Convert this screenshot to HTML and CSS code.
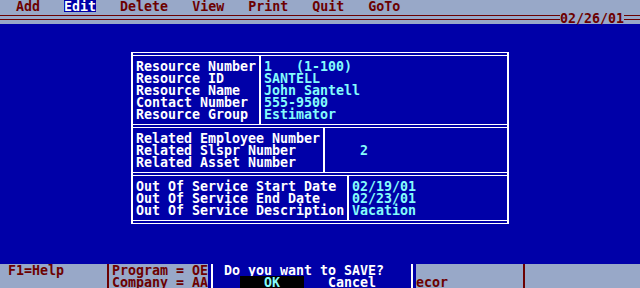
FILE: index.html
```html
<!DOCTYPE html>
<html>
<head>
<meta charset="utf-8">
<link rel="stylesheet" href="styles.css">
</head>
<body>
<div class="screen">
  <div class="menubar"><span class="t">  Add   </span><span class="t hl">Edit</span><span class="t">   Delete   View   Print   Quit   GoTo</span></div>
  <div class="titlebar"><div class="rule"></div><span class="t date">02/26/01</span><div class="rule end"></div></div>
  <main class="body">
    <div class="form">
      <div class="dbl"></div>
      <section class="sec">
        <div class="lab w1">
          <div class="t">Resource Number</div>
          <div class="t">Resource ID</div>
          <div class="t">Resource Name</div>
          <div class="t">Contact Number</div>
          <div class="t">Resource Group</div>
        </div>
        <div class="val">
          <div class="t">1   (1-100)</div>
          <div class="t">SANTELL</div>
          <div class="t">John Santell</div>
          <div class="t">555-9500</div>
          <div class="t">Estimator</div>
        </div>
      </section>
      <div class="dbl"></div>
      <section class="sec">
        <div class="lab w2">
          <div class="t">Related Employee Number</div>
          <div class="t">Related Slspr Number</div>
          <div class="t">Related Asset Number</div>
        </div>
        <div class="val v2">
          <div class="t">2</div>
        </div>
      </section>
      <div class="dbl"></div>
      <section class="sec">
        <div class="lab w3">
          <div class="t">Out Of Service Start Date</div>
          <div class="t">Out Of Service End Date</div>
          <div class="t">Out Of Service Description</div>
        </div>
        <div class="val">
          <div class="t">02/19/01</div>
          <div class="t">02/23/01</div>
          <div class="t">Vacation</div>
        </div>
      </section>
      <div class="dbl"></div>
    </div>
  </main>
  <footer class="status">
    <div class="st st-help"><div class="t">F1=Help</div></div>
    <div class="st st-prog"><div class="t">Program = OE</div><div class="t">Company = AA</div></div>
    <div class="dialog">
      <div class="dlg-in">
        <div class="t dlg-q">Do you want to SAVE?</div>
        <div class="dlg-btns"><span class="t btn-ok">OK</span><span class="t btn-cancel">Cancel</span></div>
      </div>
    </div>
    <div class="st st-4"><div class="t">&nbsp;</div><div class="t">ecor</div></div>
    <div class="st st-5"></div>
  </footer>
</div>
</body>
</html>
```
FILE: styles.css
```css
html, body {
  margin: 0;
  padding: 0;
  background: #0000a8;
}
.screen {
  width: 640px;
  height: 288px;
  display: flex;
  flex-direction: column;
  background: #0000a8;
  font-family: "DejaVu Sans Mono", "Liberation Mono", monospace;
  font-weight: bold;
  font-size: 13.3px;
  line-height: 12px;
  overflow: hidden;
}
.t {
  display: block;
  white-space: pre;
  box-sizing: border-box;
  height: 12px;
  padding-top: 1px;
}
.menubar {
  height: 12px;
  background: #98a8c8;
  color: #6c0000;
  display: flex;
}
.hl {
  background: #0000a8;
  color: #ffffff;
}
.titlebar {
  height: 12px;
  background: #98a8c8;
  display: flex;
  align-items: flex-start;
}
.rule {
  flex: 1;
  margin-top: 3px;
  height: 3px;
  border-top: 1px solid #6c0000;
  border-bottom: 1px solid #6c0000;
}
.rule.end {
  flex: none;
  width: 16px;
}
.date {
  width: 64px;
  color: #6c0000;
}
.body {
  flex: 1;
}
.form {
  margin-top: 28px;
  margin-left: 131px;
  width: 378px;
  box-sizing: border-box;
  border-left: 2px solid #ffffff;
  border-right: 2px solid #ffffff;
}
.dbl {
  height: 2px;
  border-top: 1px solid #ffffff;
  border-bottom: 1px solid #ffffff;
}
.sec {
  display: flex;
}
.lab {
  box-sizing: border-box;
  padding: 4px 0 4px 3px;
  border-right: 2px solid #ffffff;
  color: #ffffff;
}
.w1 { width: 128px; }
.w2 { width: 192px; }
.w3 { width: 216px; }
.val {
  padding: 4px 0 4px 3px;
  color: #84fcfc;
}
.val.v2 {
  padding-left: 35px;
  padding-top: 16px;
}
.status {
  height: 24px;
  display: flex;
}
.st {
  box-sizing: border-box;
  height: 24px;
  background: #98a8c8;
  color: #6c0000;
}
.st-help {
  width: 109px;
  padding-left: 8px;
  border-right: 2px solid #6c0000;
}
.st-prog {
  width: 99px;
  padding-left: 3px;
}
.dialog {
  width: 208px;
  box-sizing: border-box;
  padding: 0 3px;
  background: #0000a8;
}
.dlg-in {
  height: 24px;
  border-left: 2px solid #ffffff;
  border-right: 2px solid #ffffff;
  color: #ffffff;
}
.dlg-q {
  padding-left: 11px;
}
.dlg-btns {
  display: flex;
}
.btn-ok {
  margin-left: 27px;
  width: 64px;
  background: #000000;
  color: #84fcfc;
  text-align: center;
}
.btn-cancel {
  margin-left: 24px;
}
.st-4 {
  width: 109px;
  border-right: 2px solid #6c0000;
}
.st-5 {
  flex: 1;
}
```
